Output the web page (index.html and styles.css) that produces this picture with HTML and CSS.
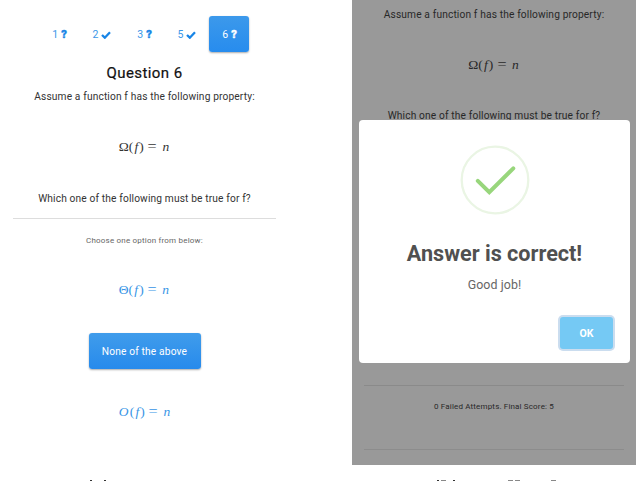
FILE: index.html
```html
<!DOCTYPE html>
<html lang="en">
<head>
<meta charset="utf-8">
<title>Question 6</title>
<link rel="stylesheet" href="styles.css">
</head>
<body>
<main class="screens">
  <section class="quiz">
    <nav class="steps">
      <a class="step">1 <b>?</b></a>
      <a class="step">2 <svg class="tick" viewBox="0 0 10 8"><path d="M1 4 3.8 6.7 9 1.3"/></svg></a>
      <a class="step">3 <b>?</b></a>
      <a class="step">5 <svg class="tick" viewBox="0 0 10 8"><path d="M1 4 3.8 6.7 9 1.3"/></svg></a>
      <a class="step active">6 <b>?</b></a>
    </nav>
    <h1 class="title">Question 6</h1>
    <p class="text assume">Assume a function f has the following property:</p>
    <p class="math formula"><span>Ω</span><span>(</span><i>f</i><span>)</span><span class="eq">=</span><i>n</i></p>
    <p class="text which">Which one of the following must be true for f?</p>
    <p class="hint">Choose one option from below:</p>
    <a class="math option"><span>Θ</span><span>(</span><i>f</i><span>)</span><span class="eq">=</span><i>n</i></a>
    <button class="choice">None of the above</button>
    <a class="math option"><i>O</i><span>(</span><i>f</i><span>)</span><span class="eq">=</span><i>n</i></a>
    <div class="caption"><span class="dot"></span><span class="dot"></span></div>
  </section>
  <section class="result">
    <div class="dimmed">
      <p class="text assume">Assume a function f has the following property:</p>
      <p class="math formula"><span>Ω</span><span>(</span><i>f</i><span>)</span><span class="eq">=</span><i>n</i></p>
      <p class="text which">Which one of the following must be true for f?</p>
      <p class="score">0 Failed Attempts. Final Score: 5</p>
      <div class="modal">
        <svg class="success" viewBox="0 0 70 70"><circle cx="35" cy="35" r="33.3"/><path d="M17.8 35.8 29.3 47.2 53.3 23.3"/></svg>
        <h2 class="modal-title">Answer is correct!</h2>
        <p class="modal-text">Good job!</p>
        <button class="ok">OK</button>
      </div>
    </div>
    <div class="caption"><span class="dot"></span><span class="bar"></span><span class="dot late"></span><span class="bar first"></span><span class="bar"></span><span class="bar last"></span></div>
  </section>
</main>
</body>
</html>
```
FILE: styles.css
```css
* { box-sizing: border-box; }
body { margin: 0; background: #fff; color: #333; font-family: Roboto, sans-serif; overflow: hidden; }
h1, h2, p { margin: 0; font-weight: 400; }
button { border: 0; padding: 0; font-family: inherit; }
.screens { display: flex; gap: 63px; width: 640px; height: 481px; overflow: hidden; }
.quiz { width: 289px; height: 481px; padding: 16px 13px 0; display: flex; flex-direction: column; align-items: center; }
.steps { display: flex; align-self: stretch; justify-content: flex-end; padding-right: 27px; height: 36px; color: #3b97e8; font-size: 10.5px; }
.step { display: flex; align-items: center; justify-content: center; gap: 3px; width: 40px; padding: 1px 0 0 1px; }
.step:nth-child(1) { width: 40px; }
.step:nth-child(2) { width: 45px; }
.step:nth-child(4) { width: 45px; }
.step b { font-weight: 900; font-size: 11px; color: #1885e6; -webkit-text-stroke: .4px; }
.tick { width: 10px; height: 8px; fill: none; stroke: #1885e6; stroke-width: 2.3; }
.active { color: #fff; border-radius: 3px; background: linear-gradient(#3c99eb, #278cee); box-shadow: 0 1px 2px #0005; }
.step.active b { color: #fff; }
.title { height: 42px; line-height: 42px; font-size: 15px; letter-spacing: .42px; color: #111; -webkit-text-stroke: .2px; }
.text { font-size: 10.2px; letter-spacing: .14px; white-space: nowrap; text-align: center; }
.assume { height: 5px; line-height: 5px; }
.math { display: flex; justify-content: center; align-items: center; font: 13.5px "Liberation Serif", serif; }
.math i { margin: 0 1.2px; }
.math .eq { margin: 0 5px 0 4.5px; font-size: 14px; transform: scaleX(1.15); }
.formula { height: 96px; }
.which { align-self: stretch; height: 24px; line-height: 7px; border-bottom: 1px solid #ddd; }
.hint { height: 42px; line-height: 43px; font-size: 8px; letter-spacing: .2px; color: #666; }
.option { height: 58px; color: #3795e6; margin-bottom: 14px; }
.choice { width: 112px; height: 36px; flex: none; border-radius: 3px; background: linear-gradient(#409ceb, #278aec); color: #fff; font-size: 10.2px; letter-spacing: .16px; box-shadow: 0 1px 2px #0005; }
.choice + .option { height: 58px; margin: 14px 0 39px; }
.result { width: 284px; }
.dimmed { position: relative; width: 284px; height: 465px; padding: 12px 12px 0; background: #999; color: #282828; }
.dimmed .which { height: 273px; line-height: 5px; border-bottom: 1px solid #8a8a8a; }
.dimmed .score { height: 64px; line-height: 42px; border-bottom: 1px solid #8c8c8c; text-align: center; font-size: 8px; letter-spacing: .16px; }
.modal { position: absolute; left: 7px; top: 120px; width: 271px; height: 243px; border-radius: 4px; background: #fff; display: flex; flex-direction: column; align-items: center; padding-top: 25px; }
.success { width: 70px; height: 70px; fill: none; stroke: #98d67c; stroke-width: 4; stroke-linecap: round; }
.success circle { stroke: #eaf5e4; stroke-width: 2.3; }
.modal-title { margin-top: 24px; line-height: 30px; font-size: 21.6px; font-weight: 700; color: #505050; }
.modal-text { margin-top: 6px; line-height: 20px; font-size: 12.4px; letter-spacing: .1px; color: #666; }
.ok { align-self: flex-end; width: 53px; height: 32px; margin: 22px 17px 0 0; border-radius: 3px; background: #75c9f4; color: #fff; font-size: 10.5px; font-weight: 700; box-shadow: 0 0 0 2px #cbddef; }
.caption { display: flex; align-self: stretch; }
.dot { width: 2px; height: 1px; background: #333; }
.quiz .caption { gap: 12px; padding: 0 0 0 77px; }
.result .caption { padding: 15px 0 0 85px; }
.bar { width: 5px; height: 1px; margin-left: 2px; background: #888; }
.late { margin-left: 7px; }
.first { margin-left: 53px; }
.last { margin-left: 31px; }
```
